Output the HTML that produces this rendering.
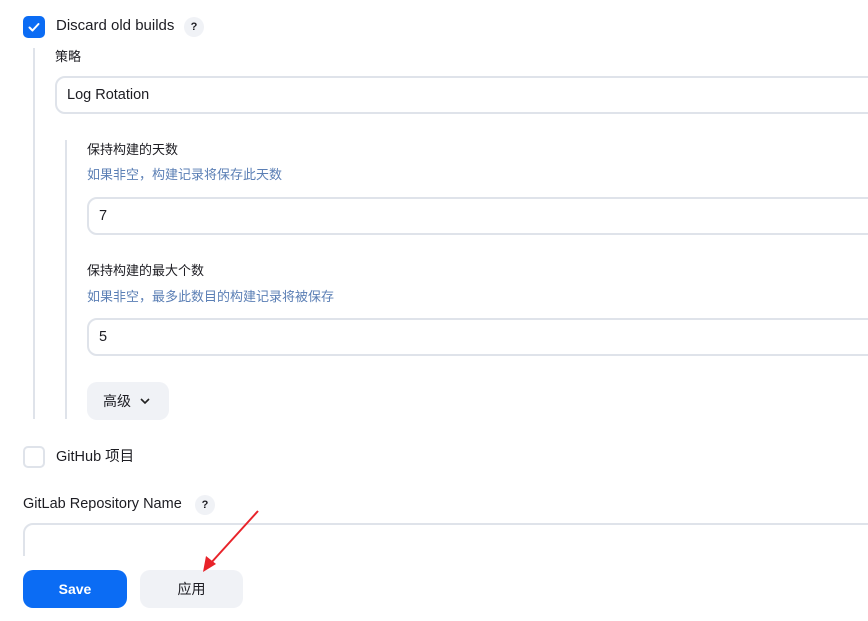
<!DOCTYPE html><html><head><meta charset="utf-8"><style>
body{margin:0;width:868px;height:621px;overflow:hidden;background:#fff;font-family:"Liberation Sans","Noto Sans CJK SC",sans-serif;color:#1c1c22;position:relative}
.a{position:absolute}
.t{font-size:14px;line-height:20px}
.inp{position:absolute;border:2px solid #dfe3ea;border-radius:10px;background:#fff;box-sizing:border-box;font-size:14.5px;padding-left:10px;display:flex;align-items:center}
.h{position:absolute;width:20px;height:20px;border-radius:50%;background:#f0f2f6;font-size:11px;font-weight:bold;text-align:center;line-height:20px}
.blue{color:#5b7fb5;font-size:13px}
</style></head><body>
<div class="a" style="left:23px;top:16px;width:22px;height:22px;background:#0b6cf4;border-radius:5px"><svg width="22" height="22"><path d="M6.5 11.5l3 3 6-6.5" stroke="#fff" stroke-width="2" fill="none" stroke-linecap="round" stroke-linejoin="round"/></svg></div>
<div class="a t" style="left:56px;top:16px;font-size:15px">Discard old builds</div>
<div class="h" style="left:184px;top:17px">?</div>
<div class="a" style="left:33px;top:48px;width:2px;height:371px;background:#dfe3ea"></div>
<div class="a t" style="left:55px;top:47px;font-size:13px">策略</div>
<div class="inp" style="left:55px;top:76px;width:840px;height:38px">Log Rotation</div>
<div class="a" style="left:65px;top:140px;width:2px;height:279px;background:#dfe3ea"></div>
<div class="a t" style="left:87px;top:140px;font-size:13px">保持构建的天数</div>
<div class="a t blue" style="left:87px;top:165px">如果非空，构建记录将保存此天数</div>
<div class="inp" style="left:87px;top:197px;width:820px;height:38px">7</div>
<div class="a t" style="left:87px;top:261px;font-size:13px">保持构建的最大个数</div>
<div class="a t blue" style="left:87px;top:287px">如果非空，最多此数目的构建记录将被保存</div>
<div class="inp" style="left:87px;top:318px;width:820px;height:38px">5</div>
<div class="a" style="left:87px;top:382px;width:82px;height:38px;background:#f0f2f6;border-radius:10px;font-size:14px;line-height:38px;box-sizing:border-box;padding-left:16px">高级 <svg width="12" height="10" style="margin-left:4px"><path d="M2 3l4 4 4-4" stroke="#222" stroke-width="1.6" fill="none"/></svg></div>
<div class="a" style="left:23px;top:446px;width:22px;height:22px;border:2px solid #dfe3ea;border-radius:5px;box-sizing:border-box"></div>
<div class="a t" style="left:56px;top:447px;font-size:14.5px">GitHub 项目</div>
<div class="a t" style="left:23px;top:494px;font-size:14.5px">GitLab Repository Name</div>
<div class="h" style="left:195px;top:495px">?</div>
<div class="inp" style="left:23px;top:523px;width:880px;height:50px"></div>
<div class="a" style="left:0;top:556px;width:868px;height:65px;background:#fff"></div>
<div class="a" style="left:23px;top:570px;width:104px;height:38px;background:#0b6cf4;border-radius:10px;color:#fff;font-weight:bold;font-size:14px;text-align:center;line-height:38px">Save</div>
<div class="a" style="left:140px;top:570px;width:103px;height:38px;background:#f0f2f6;border-radius:10px;font-size:14px;text-align:center;line-height:38px">应用</div>
<svg class="a" style="left:0;top:0" width="868" height="621"><path d="M258 511L210 564" stroke="#e8232a" stroke-width="2"/><path d="M203 572L206 556L216 564Z" fill="#e8232a"/></svg>
</body></html>
